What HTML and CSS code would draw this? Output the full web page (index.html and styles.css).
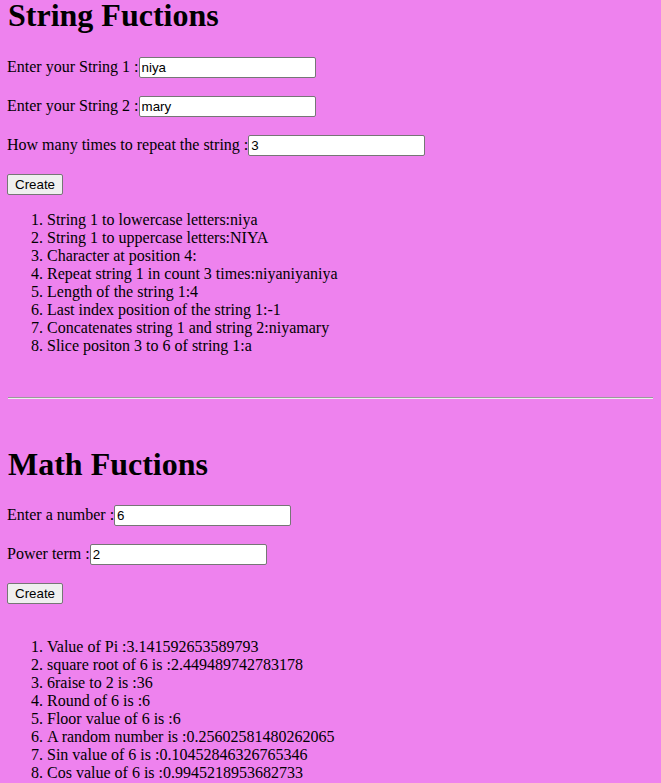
FILE: index.html
```html
<!DOCTYPE html>
<html>
<head>
<meta charset="utf-8">
<title>String and Math Functions</title>
<link rel="stylesheet" href="styles.css">
</head>
<body class="page">
<section class="block">
  <h1 class="title title-first">String Fuctions</h1>
  <p class="row">Enter your String 1 :<input class="field" type="text" value="niya"></p>
  <p class="row">Enter your String 2 :<input class="field" type="text" value="mary"></p>
  <p class="row">How many times to repeat the string :<input class="field" type="text" value="3"></p>
  <p class="row"><button class="btn" type="button">Create</button></p>
  <ol class="results">
    <li>String 1 to lowercase letters:niya</li>
    <li>String 1 to uppercase letters:NIYA</li>
    <li>Character at position 4:</li>
    <li>Repeat string 1 in count 3 times:niyaniyaniya</li>
    <li>Length of the string 1:4</li>
    <li>Last index position of the string 1:-1</li>
    <li>Concatenates string 1 and string 2:niyamary</li>
    <li>Slice positon 3 to 6 of string 1:a</li>
  </ol>
  <div class="spacer"></div>
</section>
<hr class="rule">
<section class="block">
  <div class="spacer-hr"></div>
  <h1 class="title title-math">Math Fuctions</h1>
  <p class="row">Enter a number :<input class="field" type="text" value="6"></p>
  <p class="row">Power term :<input class="field" type="text" value="2"></p>
  <p class="row"><button class="btn" type="button">Create</button></p>
  <ol class="results results-math">
    <li>Value of Pi :3.141592653589793</li>
    <li>square root of 6 is :2.449489742783178</li>
    <li>6raise to 2 is :36</li>
    <li>Round of 6 is :6</li>
    <li>Floor value of 6 is :6</li>
    <li>A random number is :0.25602581480262065</li>
    <li>Sin value of 6 is :0.10452846326765346</li>
    <li>Cos value of 6 is :0.9945218953682733</li>
  </ol>
</section>
</body>
</html>
```
FILE: styles.css
```css
html {
  background: #ee82ee;
}
.page {
  margin: 0 8px 0 7px;
  font-family: "Liberation Serif", "Times New Roman", serif;
  font-size: 16px;
  color: #000;
  background: #ee82ee;
}
.block {
  display: flow-root;
}
.title {
  font-size: 32px;
  font-weight: bold;
  margin: 21px 0 21px 1px;
  line-height: 37px;
}
.title-first {
  margin-top: -3px;
}
.title-math {
  margin-bottom: 20px;
}
.row {
  margin: 16px 0;
  line-height: 23px;
}
.field {
  font-family: "Liberation Sans", Arial, sans-serif;
  font-size: 13.33px;
  width: 177px;
  height: 21px;
  box-sizing: border-box;
  padding: 1px 2px;
  border: 1px solid #767676;
  border-radius: 2px;
  margin: 0;
  vertical-align: baseline;
  background: #fff;
  color: #000;
}
.btn {
  font-family: "Liberation Sans", Arial, sans-serif;
  font-size: 13.33px;
  height: 21px;
  padding: 1px 7px;
  border: 1px solid #767676;
  border-radius: 2px;
  background: #efefef;
  color: #000;
  margin: 0;
}
.results {
  margin: 16px 0;
  padding-left: 40px;
  line-height: 18px;
}
.results-math {
  margin-top: 34px;
}
.spacer {
  height: 18px;
}
.spacer-hr {
  height: 18px;
}
.rule {
  margin: 8px -20px 8px 1px;
  border: 0;
  border-top: 1px solid #9a9a9a;
  border-bottom: 1px solid #eeeeee;
  height: 0;
}
```
